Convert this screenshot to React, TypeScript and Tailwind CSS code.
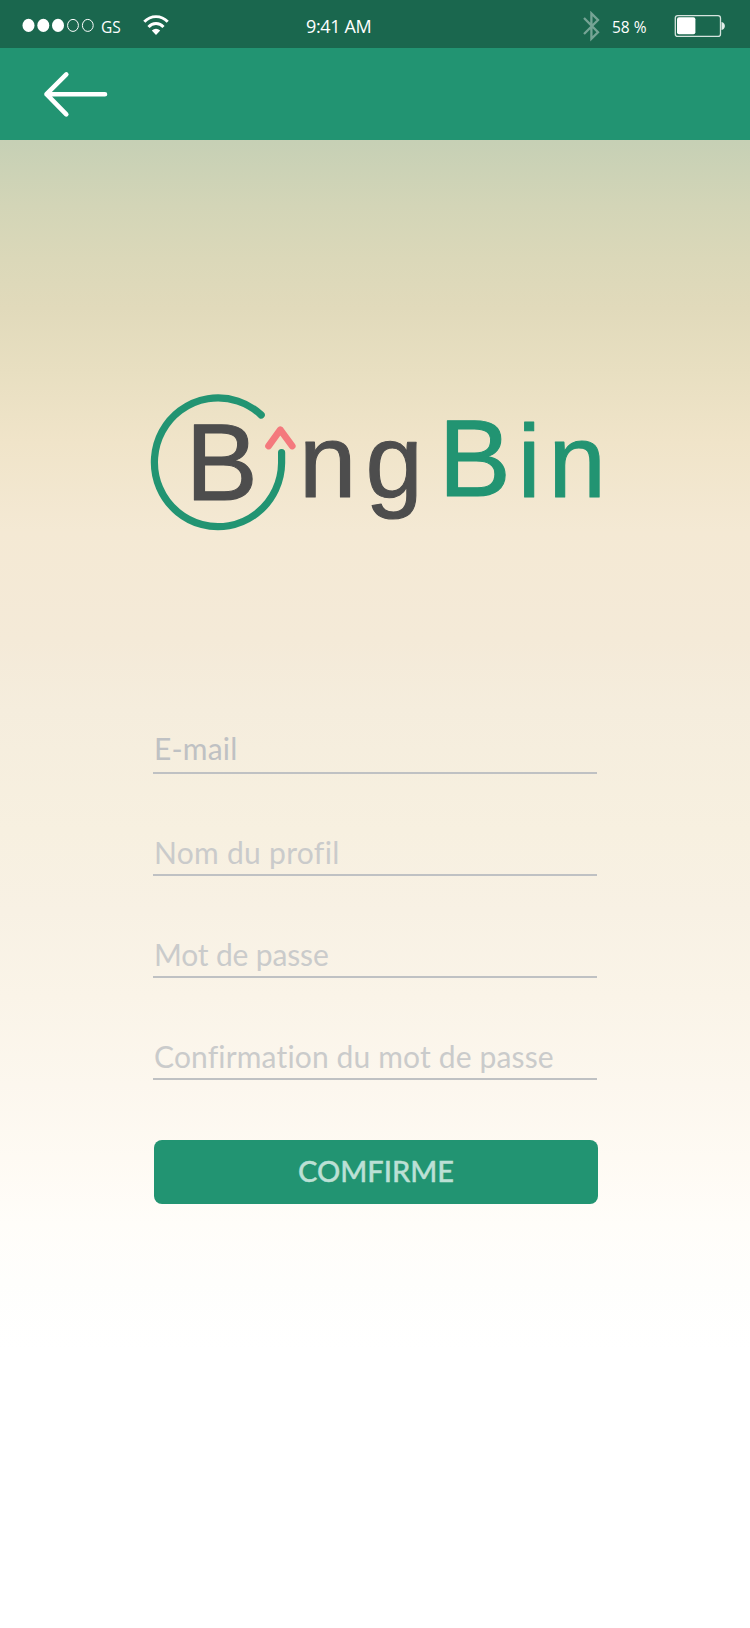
const statusFont = "font-['Open_Sans','Noto_Sans',sans-serif] text-white whitespace-pre leading-none";

function StatusBar() {
  return (
    <header className="flex h-12 items-start bg-[#1a674e]">
      <svg className="ml-[22px] mt-[18px] shrink-0" width="73" height="15" viewBox="22 18 73 15" fill="white">
        <ellipse cx="28.5" cy="25.4" rx="6" ry="6.6" />
        <ellipse cx="43.3" cy="25.4" rx="6" ry="6.6" />
        <ellipse cx="58" cy="25.4" rx="6" ry="6.6" />
        <ellipse cx="73" cy="25.4" rx="5.4" ry="6" fill="none" stroke="white" />
        <ellipse cx="87.8" cy="25.4" rx="5.4" ry="6" fill="none" stroke="white" />
      </svg>
      <span className={`${statusFont} ml-[6px] mt-[20px] w-[30px] text-[15.5px]`}>GS</span>
      <svg className="ml-[11px] mt-[14px] shrink-0" width="28" height="22" viewBox="142 14 28 22" fill="none" stroke="white" strokeWidth="2.9">
        <path d="M144.3 21.8C150.6 14.9 161.4 14.9 167.7 21.8" />
        <path d="M148.5 27C152.6 22.3 159.4 22.3 163.5 27" />
        <path d="M156 35L151.8 30.6Q156 27 160.2 30.6Z" fill="white" stroke="none" />
      </svg>
      <span className={`${statusFont} ml-[136px] mt-[17px] w-[80px] text-[18px] tracking-[-0.35px]`}>9:41 AM</span>
      <svg className="ml-[196px] mt-[11px] shrink-0" width="18" height="31" viewBox="582 11 18 31" fill="none" stroke="#76a495" strokeWidth="2.3">
        <path d="M584 18L598 32.2L591.4 38.8V13.4L598 20L584 34" />
      </svg>
      <span className={`${statusFont} ml-[12px] mt-[20px] w-[44px] text-[15.5px]`}>58 %</span>
      <svg className="ml-[18px] mt-[14px] shrink-0" width="53" height="24" viewBox="674 14 53 24">
        <rect x="675.3" y="15.6" width="45.2" height="20.8" rx="2.5" fill="none" stroke="#d5e4de" strokeWidth="1.3" />
        <rect x="677" y="17.2" width="18.4" height="17" rx="2" fill="white" />
        <path d="M721.5 22C726 23 726 29 721.5 30Z" fill="#e3eeea" />
      </svg>
    </header>
  );
}

function NavBar() {
  return (
    <nav className="flex h-[92px] items-center bg-[#229472] pl-[43px]">
      <button aria-label="Retour">
        <svg width="66" height="48" viewBox="43 70 66 48" fill="none" stroke="white" strokeWidth="4.6" strokeLinecap="round" strokeLinejoin="round">
          <path d="M105 94.2H46.5M66.3 74.4L46.5 94.2L66.3 114.4" />
        </svg>
      </button>
    </nav>
  );
}

function Logo() {
  return (
    <svg
      className="ml-[148px] block"
      width="460"
      height="144"
      viewBox="148 391 460 144"
      fontFamily="'Liberation Sans', Arial, sans-serif"
      fontSize="103"
      strokeLinejoin="round"
    >
      <path d="M261.2 415A63.6 64.4 0 1 0 281.6 463V452.5" fill="none" stroke="#229472" strokeWidth="7.2" strokeLinecap="round" />
      <path d="M268.6 446L280.3 429.8L292.2 446" fill="none" stroke="#f4797d" strokeWidth="6.8" strokeLinecap="round" />
      <g fill="#4d4d4d" stroke="#4d4d4d" strokeWidth="1.1">
        <text x="185.4" y="499.9" fontSize="108.5">B</text>
        <text x="299" y="497.2">n</text>
        <text x="365.4" y="497.2">g</text>
      </g>
      <g fill="#229472" stroke="#229472" strokeWidth="1.1">
        <text x="438.6" y="496.2" fontSize="108.5">B</text>
        <text x="517.8" y="496.6">i</text>
        <text x="548.6" y="496.6">n</text>
      </g>
    </svg>
  );
}

const fields = [
  { label: "E-mail", style: "text-[#bfc1c3] tracking-[0.2px] mb-1.5", box: "h-[52px]" },
  { label: "Nom du profil", style: "text-[#cacbcb] tracking-[0.3px] mb-1", box: "h-[102px]" },
  { label: "Mot de passe", style: "text-[#cacbcb] tracking-[-0.15px] mb-1", box: "h-[102px]" },
  { label: "Confirmation du mot de passe", style: "text-[#cacbcb] tracking-[0.15px] mb-1", box: "h-[102px]" },
];

export default function App() {
  return (
    <div className="flex h-[1628px] w-[750px] flex-col overflow-hidden bg-white">
      <StatusBar />
      <NavBar />
      <main className="flex-1 bg-[linear-gradient(180deg,#c6d0b5_0px,#d3d5b7_66px,#dbd8b9_119px,#e1dabb_168px,#e8dfc1_231px,#f0e4c9_302px,#f4e9d4_392px,#f4ead8_499px,#f5eddd_570px,#f7f0e0_690px,#f8f1e4_771px,#faf4e8_856px,#fcf7ee_945px,#fefaf3_1017px,#fffdf9_1084px,#fefefc_1142px,#ffffff_1210px)] pt-[251px]">
        <Logo />
        <form className="ml-[153px] mt-[187px] w-[444px]">
          {fields.map((f) => (
            <div key={f.label} className={`flex flex-col justify-end border-b-2 border-[#bfc1c3] ${f.box}`}>
              <span className={`whitespace-nowrap pl-px font-['Futura','Lato',sans-serif] text-[30px] leading-9 ${f.style}`}>{f.label}</span>
            </div>
          ))}
          <button
            type="button"
            className="ml-px mt-[60px] flex h-16 w-[444px] items-center justify-center rounded-lg bg-[#229472] pb-0.5 font-['Futura','Lato',sans-serif] text-[29px] font-medium text-[#bce0d5] [-webkit-text-stroke:0.4px_#bce0d5]"
          >
            COMFIRME
          </button>
        </form>
      </main>
    </div>
  );
}
